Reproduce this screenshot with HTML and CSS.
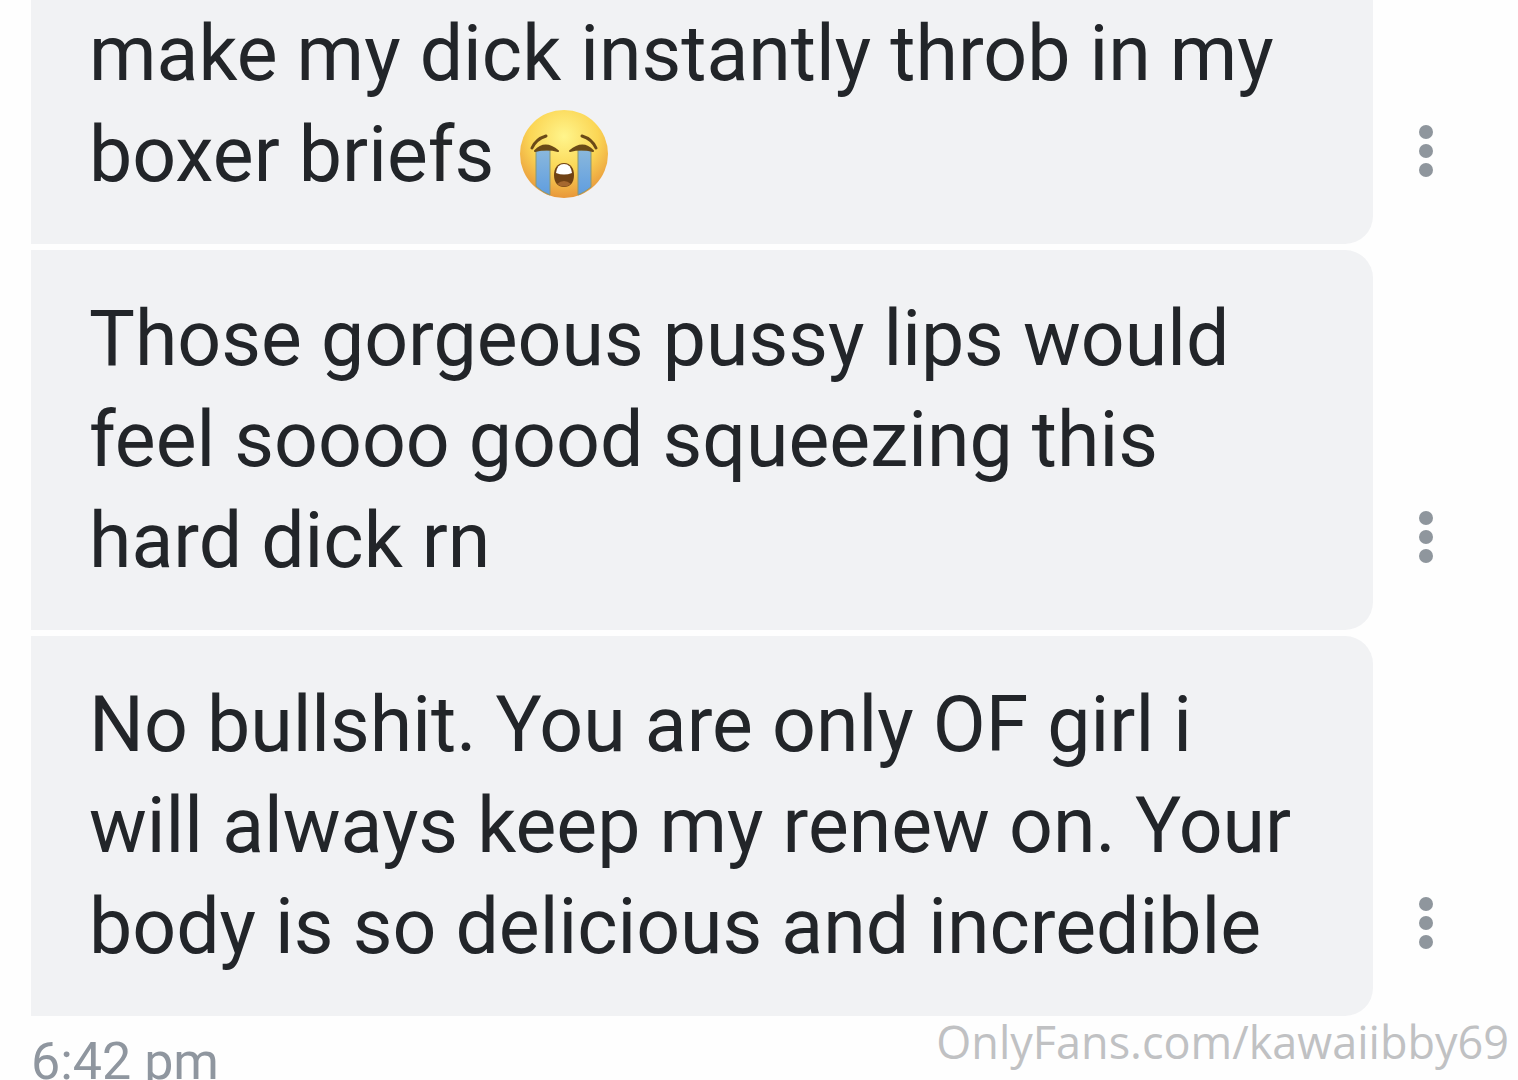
FILE: index.html
```html
<!DOCTYPE html>
<html lang="en">
  <head>
    <meta charset="UTF-8" />
    <meta name="viewport" content="width=device-width, initial-scale=1.0" />
    <title>Messages</title>
    <link rel="stylesheet" href="styles.css">
  </head>
  <body>
    <main class="chat">
      <div class="message">
        <p class="bubble first">make my dick instantly throb in my<br>boxer briefs
          <svg class="emoji" viewBox="0 0 90 90" role="img" aria-label="loudly crying face">
            <defs>
              <radialGradient id="face" cx="50%" cy="30%" r="70%">
                <stop offset="0" stop-color="#fff58c" />
                <stop offset="0.55" stop-color="#fbd655" />
                <stop offset="1" stop-color="#e8973a" />
              </radialGradient>
              <linearGradient id="tear" x1="0" y1="0" x2="0" y2="1">
                <stop offset="0" stop-color="#8ab8dc" />
                <stop offset="1" stop-color="#5f9de0" />
              </linearGradient>
            </defs>
            <circle cx="45" cy="45" r="44" fill="url(#face)" />
            <path d="M17 41h14v45q-8-3-14-9zM59 41h13v37q-6 5-13 8z" fill="url(#tear)" stroke="#8b9873" stroke-width="1" />
            <path d="M13 39q4-9 14-12M77 39q-4-9-14-12" fill="none" stroke="#6b4a17" stroke-width="3" stroke-linecap="round" />
            <path d="M16 42q10-11 23 0-11-3-23 0zM51 42q13-11 23 0-12-3-23 0z" fill="#6b4a17" stroke="#6b4a17" stroke-width="2" stroke-linejoin="round" />
            <path d="M45 54c7 0 10 6 10 12 0 8-4 12-10 12s-10-4-10-12c0-6 3-12 10-12z" fill="#704214" />
            <path d="M37 64q1-9 8-9t8 9q-8 3-16 0z" fill="#fff" />
            <path d="M38 75q7-6 14 0-7 5-14 0z" fill="#a5682f" />
          </svg>
        </p>
        <button class="more" aria-label="More options"><svg viewBox="0 0 14 54"><circle cx="7" cy="8" r="7" /><circle cx="7" cy="27" r="7" /><circle cx="7" cy="46" r="7" /></svg></button>
      </div>
      <div class="message">
        <p class="bubble">Those gorgeous pussy lips would<br>feel soooo good squeezing this<br>hard dick rn</p>
        <button class="more" aria-label="More options"><svg viewBox="0 0 14 54"><circle cx="7" cy="8" r="7" /><circle cx="7" cy="27" r="7" /><circle cx="7" cy="46" r="7" /></svg></button>
      </div>
      <div class="message">
        <p class="bubble">No bullshit. You are only OF girl i<br>will always keep my renew on. Your<br>body is so delicious and incredible</p>
        <button class="more" aria-label="More options"><svg viewBox="0 0 14 54"><circle cx="7" cy="8" r="7" /><circle cx="7" cy="27" r="7" /><circle cx="7" cy="46" r="7" /></svg></button>
      </div>
      <footer class="footer">
        <time class="time">6:42 pm</time>
        <span class="watermark">OnlyFans.com/kawaiibby69</span>
      </footer>
    </main>
  </body>
</html>
```

FILE: styles.css
```css
body {
  margin: 0;
  background: #fefefe;
  color: #222529;
  font-family: Roboto, sans-serif;
  overflow: hidden;
}
.chat {
  display: flex;
  flex-direction: column;
  gap: 6px;
  padding-left: 31px;
}
.message {
  display: flex;
  align-items: flex-end;
}
.bubble {
  flex: 1;
  margin: 0;
  padding: 39px 0 38px 58px;
  border-radius: 0 28px 28px 0;
  background: #f1f2f4;
  font-size: 77px;
  line-height: 101px;
  white-space: nowrap;
}
.first {
  padding-top: 4px;
  border-top-right-radius: 0;
}
.emoji {
  width: 90px;
  height: 90px;
  margin-left: 6px;
  vertical-align: -18px;
}
.more {
  flex: none;
  width: 145px;
  height: 54px;
  margin-bottom: 66px;
  padding: 0 0 0 46px;
  border: 0;
  background: none;
  text-align: left;
  fill: #8f969d;
}
.more svg {
  display: block;
  width: 14px;
  height: 54px;
}
.footer {
  display: flex;
  justify-content: space-between;
  align-items: flex-start;
  padding-right: 9px;
}
.time {
  margin-top: 10px;
  color: #8f969f;
  font-size: 52px;
  line-height: 60px;
}
.watermark {
  color: #c0c1c3;
  font-family: "Open Sans", sans-serif;
  font-size: 45px;
  line-height: 40px;
}
```
